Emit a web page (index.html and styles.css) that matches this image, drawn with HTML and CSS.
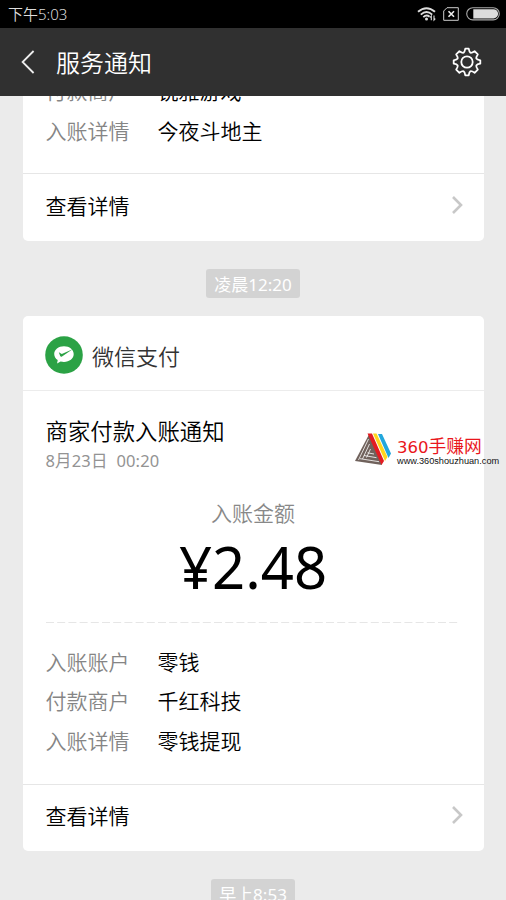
FILE: index.html
```html
<!DOCTYPE html>
<html lang="zh-CN">
<head>
<meta charset="utf-8">
<title>服务通知</title>
<link rel="stylesheet" href="styles.css">
</head>
<body>
<div class="screen">
  <header class="status">
    <span class="clock">下午5:03</span>
    <div class="status-icons">
      <svg class="wifi" width="20" height="16" viewBox="0 0 20 16" fill="none" stroke="#ddd" stroke-width="1.9">
        <path d="M1 5.800Q9.500-1.500 18 5.800M3.800 8.600Q9.500 3.500 15.200 8.600M6.300 11.100Q9.500 8.200 12.600 10.800"/>
        <circle cx="9.500" cy="13" r="1.500" fill="#ddd" stroke="none"/>
        <path d="M14.300 14.200V10L13 11.500M17 9.600V14L18.300 12.600" stroke-width="1.100"/>
      </svg>
      <svg class="sim" width="16" height="14" viewBox="0 0 16 14" fill="none" stroke="#ccc">
        <path d="M4 .7H15.300V13.300H.7V4Z"/>
        <path d="M5.500 4.200L11 9.800M11 4.200L5.500 9.800" stroke="#eee" stroke-width="1.600"/>
      </svg>
      <svg class="battery" width="34" height="14" viewBox="0 0 34 14">
        <rect x=".7" y=".7" width="32.600" height="12.200" rx="6.100" fill="none" stroke="#aaa" stroke-width="1.100"/>
        <path d="M7.300 2.200H27.500A4.600 4.600 0 0 1 27.500 11.400H7.300Z" fill="#dcdcdc"/>
      </svg>
    </div>
  </header>
  <nav class="nav">
    <svg class="back" width="14" height="24" viewBox="0 0 14 24" fill="none" stroke="#eee" stroke-width="1.800"><path d="M12.600 1L1.600 12L12.600 23"/></svg>
    <h1>服务通知</h1>
    <svg class="gear" width="30" height="30" viewBox="-15 -15 30 30" fill="none" stroke="#fff" stroke-width="1.800" stroke-linejoin="round">
      <circle r="5.700"/>
      <path d="M-1.700-13.300H1.700Q2.300-10 3.400-9.300Q4.700-8.800 7.600-10.800L10.800-7.600Q8.800-4.700 9.300-3.400Q10-2.300 13.300-1.700V1.700Q10 2.300 9.300 3.400Q8.800 4.700 10.800 7.600L7.600 10.800Q4.700 8.800 3.400 9.300Q2.300 10 1.700 13.300H-1.700Q-2.300 10-3.400 9.300Q-4.700 8.800-7.600 10.800L-10.800 7.600Q-8.800 4.700-9.300 3.400Q-10 2.300-13.300 1.700V-1.700Q-10-2.300-9.300-3.400Q-8.800-4.700-10.800-7.600L-7.600-10.800Q-4.700-8.800-3.400-9.300Q-2.300-10-1.700-13.300Z"/>
    </svg>
  </nav>
  <main class="feed">
    <section class="card card-top">
      <dl class="rows">
        <dt>付款商户</dt><dd>锐雅游戏</dd>
        <dt>入账详情</dt><dd>今夜斗地主</dd>
      </dl>
      <div class="more"><span>查看详情</span>
        <svg width="14" height="20" viewBox="0 0 14 20" fill="none" stroke="#c8c8c8" stroke-width="2.600"><path d="M3 2L11 10L3 18"/></svg></div>
    </section>
    <time class="chip">凌晨12:20</time>
    <section class="card">
      <div class="brand">
        <svg width="38" height="38" viewBox="0 0 38 38">
          <circle cx="19" cy="19" r="18.800" fill="#2ba245"/>
          <path d="M19 10.300C13.400 10.300 9.200 13.700 9.200 18C9.200 20.600 10.600 22.700 12.700 24.100L12.100 27.400L15.600 25.500C22.500 27.200 28.700 23.500 28.700 18C28.700 13.700 24.600 10.300 19 10.300Z" fill="#fff"/>
          <path d="M13.800 16.300L16.800 18.100L27.600 13.300L17 20.500Q15.700 21.100 15.200 19.900Z" fill="#2ba245"/>
        </svg>
        <span>微信支付</span>
      </div>
      <div class="summary">
        <h2>商家付款入账通知</h2>
        <p class="date">8月23日&nbsp; 00:20</p>
        <p class="caption">入账金额</p>
        <p class="amount">¥2.48</p>
      </div>
      <svg class="dash" width="414" height="1" viewBox="0 0 414 1"><path d="M0 .5H414" stroke="#e6e6e6" stroke-dasharray="8 3.200"/></svg>
      <dl class="rows">
        <dt>入账账户</dt><dd>零钱</dd>
        <dt>付款商户</dt><dd>千红科技</dd>
        <dt>入账详情</dt><dd>零钱提现</dd>
      </dl>
      <div class="more"><span>查看详情</span>
        <svg width="14" height="20" viewBox="0 0 14 20" fill="none" stroke="#c8c8c8" stroke-width="2.600"><path d="M3 2L11 10L3 18"/></svg></div>
    </section>
    <time class="chip">早上8:53</time>
  </main>
  <aside class="mark">
    <svg width="37" height="33" viewBox="0 0 37 33">
      <path d="M14 1.500L27 32L0 28Z" fill="#70625c"/>
      <path d="M13.500 6L3.500 27M14.500 11L7.500 26M15.500 16L11.500 24.500M5 25.700L24 28.700M9 22.500L21.500 24.700M12.500 19.800L19 21" stroke="#fff" stroke-width=".8" fill="none"/>
      <path d="M12.500 .5H17L29 28L26.500 32Z" fill="#e21c22"/>
      <path d="M18 .5H21.500L32.500 24L30 28Z" fill="#ffd51c"/>
      <path d="M23 1H27L36 20.500L33.500 25Z" fill="#22a7dc"/>
    </svg>
    <div class="mark-text"><b><i>360</i>手赚网</b><span>www.360shouzhuan.com</span></div>
  </aside>
</div>
</body>
</html>
```
FILE: styles.css
```css
* { box-sizing: border-box; margin: 0; padding: 0; }
body { background: #ebebeb; font-family: "Noto Sans", "Noto Sans CJK SC", sans-serif; font-weight: 350; color: #000; overflow: hidden; }
svg { display: block; flex: none; }
.screen { position: relative; width: 506px; height: 900px; overflow: hidden; display: flex; flex-direction: column; }
.status { height: 28px; flex: none; background: #000; display: flex; align-items: center; justify-content: space-between; padding: 0 6px 0 8px; }
.clock { font-size: 15px; line-height: 28px; color: #ddd; }
.status-icons { display: flex; align-items: center; }
.sim { margin: 0 7px 0 6px; }
.nav { height: 68px; flex: none; background: #303030; color: #fff; display: flex; align-items: center; padding: 0 24px 0 21px; }
.nav h1 { flex: 1; margin-left: 21px; padding-top: 2px; font-size: 24px; font-weight: 350; line-height: 66px; }
.feed { flex: 1; min-height: 0; overflow: hidden; display: flex; flex-direction: column; align-items: center; }
.card { width: 461px; flex: none; background: #fff; border-radius: 5px; }
.card-top { margin-top: -24px; border-radius: 0 0 5px 5px; }
.rows { display: grid; grid-template-columns: 112px 1fr; grid-auto-rows: 39.5px; padding: 20px 23px 22.500px; font-size: 21px; line-height: 39.5px; }
.card-top .rows { padding: 0 23px 22px; }
.rows dt { color: #858585; }
.more { height: 67.5px; border-top: 1px solid #e6e6e6; display: flex; align-items: center; justify-content: space-between; padding: 0 20px 5px 23px; font-size: 21px; }
.chip { flex: none; height: 29px; margin: 28px 0 18px; padding: 0 8px; border-radius: 3px; background: #d3d3d3; color: #fff; font-size: 17px; font-weight: 400; line-height: 31px; }
.card-top .more { padding-bottom: 4.5px; }
.brand { height: 75px; border-bottom: 1px solid #ececec; display: flex; align-items: center; gap: 9px; padding: 5px 22.500px 0; font-size: 22px; color: #333; }
.summary { height: 231px; padding: 25px 23px 0; }
.summary h2 { font-size: 22.400px; font-weight: 350; line-height: 32px; }
.date { font-size: 16.500px; font-weight: 400; line-height: 26px; letter-spacing: .15px; color: #939393; }
.caption { margin-top: 23px; font-size: 21px; line-height: 32px; color: #888; text-align: center; }
.amount { font-size: 58px; font-weight: 400; line-height: 76px; text-align: center; }
.dash { margin-left: 23px; }
.mark { position: absolute; left: 355px; top: 433px; display: flex; gap: 5px; }
.mark-text { display: flex; flex-direction: column; }
.mark-text b { font-size: 17.800px; font-weight: 400; line-height: 22px; height: 22px; padding-top: 2px; color: #e9161c; }
.mark-text i { font: normal 16.500px/22px "DejaVu Sans", sans-serif; }
.mark-text span { font-family: "Liberation Sans", sans-serif; font-weight: 400; font-size: 9.200px; line-height: 12px; color: #111; }
```
